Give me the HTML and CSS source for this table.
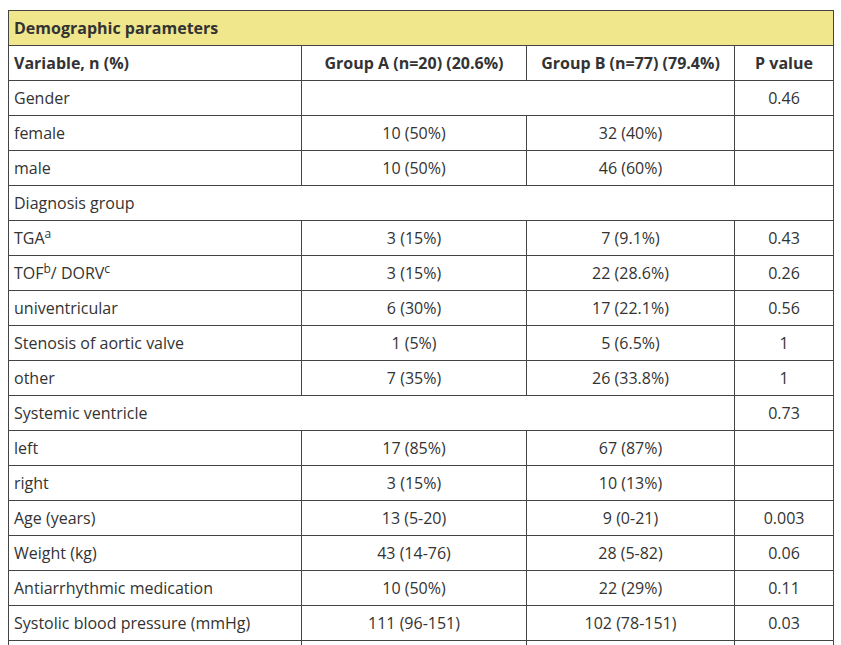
FILE: index.html
```html
<!DOCTYPE html>
<html lang="en">
<head>
<meta charset="utf-8">
<title>Demographic parameters</title>
<link rel="stylesheet" href="styles.css">
</head>
<body>
<table class="data">
  <colgroup>
    <col class="c1"><col class="c2"><col class="c3"><col class="c4">
  </colgroup>
  <thead>
    <tr class="title"><th colspan="4">Demographic parameters</th></tr>
    <tr class="heads"><th class="left">Variable, n (%)</th><th>Group A (n=20) (20.6%)</th><th>Group B (n=77) (79.4%)</th><th>P value</th></tr>
  </thead>
  <tbody>
    <tr><td class="left">Gender</td><td colspan="2"></td><td>0.46</td></tr>
    <tr><td class="left">female</td><td>10 (50%)</td><td>32 (40%)</td><td></td></tr>
    <tr><td class="left">male</td><td>10 (50%)</td><td>46 (60%)</td><td></td></tr>
    <tr><td class="left" colspan="4">Diagnosis group</td></tr>
    <tr><td class="left">TGA<sup>a</sup></td><td>3 (15%)</td><td>7 (9.1%)</td><td>0.43</td></tr>
    <tr><td class="left">TOF<sup>b</sup>/ DORV<sup>c</sup></td><td>3 (15%)</td><td>22 (28.6%)</td><td>0.26</td></tr>
    <tr><td class="left">univentricular</td><td>6 (30%)</td><td>17 (22.1%)</td><td>0.56</td></tr>
    <tr><td class="left">Stenosis of aortic valve</td><td>1 (5%)</td><td>5 (6.5%)</td><td>1</td></tr>
    <tr><td class="left">other</td><td>7 (35%)</td><td>26 (33.8%)</td><td>1</td></tr>
    <tr><td class="left" colspan="3">Systemic ventricle</td><td>0.73</td></tr>
    <tr><td class="left">left</td><td>17 (85%)</td><td>67 (87%)</td><td></td></tr>
    <tr><td class="left">right</td><td>3 (15%)</td><td>10 (13%)</td><td></td></tr>
    <tr><td class="left">Age (years)</td><td>13 (5-20)</td><td>9 (0-21)</td><td>0.003</td></tr>
    <tr><td class="left">Weight (kg)</td><td>43 (14-76)</td><td>28 (5-82)</td><td>0.06</td></tr>
    <tr><td class="left">Antiarrhythmic medication</td><td>10 (50%)</td><td>22 (29%)</td><td>0.11</td></tr>
    <tr><td class="left">Systolic blood pressure (mmHg)</td><td>111 (96-151)</td><td>102 (78-151)</td><td>0.03</td></tr>
    <tr><td class="left"></td><td></td><td></td><td></td></tr>
  </tbody>
</table>
</body>
</html>
```
FILE: styles.css
```css
html, body {
  background: #ffffff;
}
body {
  margin: 10px 0 0 8px;
  font-family: "Open Sans", "Liberation Sans", sans-serif;
  font-size: 16px;
  color: #333333;
}
.data {
  border-collapse: collapse;
  width: 825px;
  table-layout: fixed;
}
.c1 { width: 293px; }
.c2 { width: 225px; }
.c3 { width: 208px; }
.c4 { width: 99px; }
.data th,
.data td {
  border: 1px solid #444444;
  height: 33px;
  padding: 0 5px 1px;
  line-height: 20px;
  text-align: center;
  vertical-align: middle;
  font-weight: normal;
}
.data th {
  font-weight: bold;
}
.data .left {
  text-align: left;
}
.title th {
  background: #f0e68c;
  text-align: left;
}
sup {
  font-size: 12px;
  line-height: 0;
  vertical-align: 6px;
}
```
